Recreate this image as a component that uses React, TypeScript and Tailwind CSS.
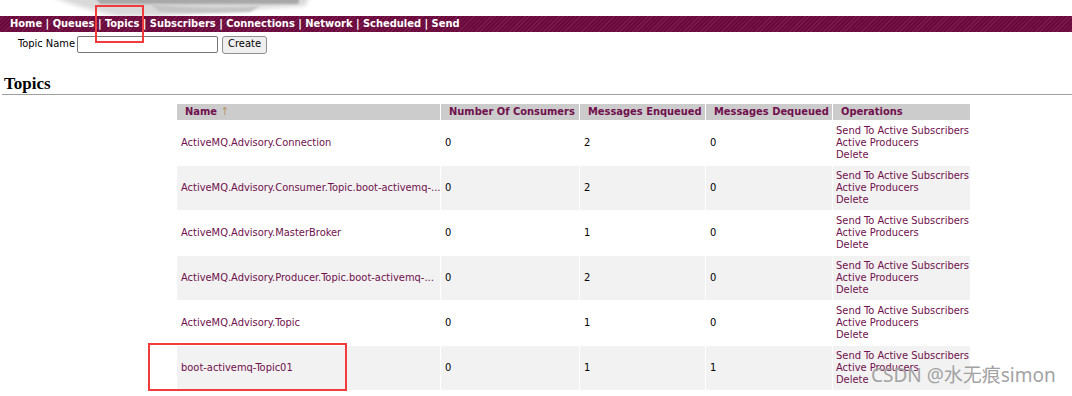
import React from "react";

const rows = [
  { name: "ActiveMQ.Advisory.Connection", c: "0", e: "2", d: "0" },
  { name: "ActiveMQ.Advisory.Consumer.Topic.boot-activemq-...", c: "0", e: "2", d: "0" },
  { name: "ActiveMQ.Advisory.MasterBroker", c: "0", e: "1", d: "0" },
  { name: "ActiveMQ.Advisory.Producer.Topic.boot-activemq-...", c: "0", e: "2", d: "0" },
  { name: "ActiveMQ.Advisory.Topic", c: "0", e: "1", d: "0" },
  { name: "boot-activemq-Topic01", c: "0", e: "1", d: "1" },
];

const navItems = ["Home", "Queues", "Topics", "Subscribers", "Connections", "Network", "Scheduled", "Send"];

function LogoFragment() {
  return (
    <svg width="320" height="16" viewBox="0 0 320 16" className="block">
      <defs>
        <filter id="b1" x="-20%" y="-50%" width="140%" height="200%">
          <feGaussianBlur stdDeviation="2" />
        </filter>
        <filter id="b2" x="-20%" y="-50%" width="140%" height="200%">
          <feGaussianBlur stdDeviation="1.2" />
        </filter>
      </defs>
      <path d="M50 -4 L310 -4 L305 6 Q230 10 160 16 L120 16 Q85 10 50 -4 Z" fill="#d9d9d9" filter="url(#b1)" />
      <path d="M95 -3 L300 -3 L298 4 L100 4 Z" fill="#a8a8a8" filter="url(#b2)" />
      <path d="M150 4 Q200 10 260 6 L250 12 Q200 14 160 12 Z" fill="#c4c4c4" filter="url(#b2)" />
    </svg>
  );
}

export default function App() {
  return (
    <div className="relative w-[1072px] h-[396px] overflow-hidden bg-white font-['DejaVu_Sans_Condensed','DejaVu_Sans',sans-serif] text-[11px] text-black">
      <div className="h-[16px]">
        <LogoFragment />
      </div>
      <div className="h-[16px] flex items-center pl-[10px] bg-[repeating-linear-gradient(135deg,#6a0a3c_0px,#6a0a3c_2px,#7b1b4d_2px,#7b1b4d_3px)] text-white font-bold text-[11px] leading-[16px]">
        {navItems.map((n, i) => (
          <span key={n} className="whitespace-pre">
            {i > 0 ? " | " : ""}
            {n}
          </span>
        ))}
      </div>
      <div className="flex items-center h-[25px] pl-[18px]">
        <span className="mr-[2px]">Topic Name</span>
        <div className="w-[141px] h-[17px] border border-[#767676] rounded-[2px] bg-white" />
        <div className="ml-[4px] w-[45px] h-[18px] border border-[#8f8f8f] rounded-[3px] bg-[#efefef] flex items-center justify-center text-[11px]">
          Create
        </div>
      </div>
      <div className="mt-[18px] pl-[4px] h-[19px]">
        <div className="font-['Liberation_Serif',serif] font-bold text-[17px] leading-[18px]">Topics</div>
      </div>
      <div className="ml-[2px] h-[1px] bg-[#a0a0a0]" />
      <div className="pl-[176px] pt-[8px]">
        <table className="border-separate border-spacing-[1px] table-fixed w-[795px]">
          <colgroup>
            <col className="w-[263px]" />
            <col className="w-[138px]" />
            <col className="w-[125px]" />
            <col className="w-[126px]" />
            <col className="w-[137px]" />
          </colgroup>
          <thead>
            <tr className="h-[16px] text-[#70104c] font-bold">
              <th className="bg-[#cccccc] text-left p-0 pl-[8px] leading-[16px] whitespace-nowrap">
                Name <span className="font-normal text-[#b8946a]">↑</span>
              </th>
              <th className="bg-[#cccccc] text-left p-0 pl-[8px] leading-[16px] whitespace-nowrap overflow-hidden">Number Of Consumers</th>
              <th className="bg-[#cccccc] text-left p-0 pl-[8px] leading-[16px] whitespace-nowrap overflow-hidden">Messages Enqueued</th>
              <th className="bg-[#cccccc] text-left p-0 pl-[8px] leading-[16px] whitespace-nowrap overflow-hidden">Messages Dequeued</th>
              <th className="bg-[#cccccc] text-left p-0 pl-[8px] leading-[16px] whitespace-nowrap">Operations</th>
            </tr>
          </thead>
          <tbody>
            {rows.map((r, i) => {
              const bg = i % 2 === 1 ? "bg-[#f2f2f2]" : "bg-white";
              return (
                <tr key={r.name} className="h-[44px]">
                  <td className={`${bg} p-0 pl-[4px] align-middle text-[#70104c] whitespace-nowrap overflow-hidden`}>{r.name}</td>
                  <td className={`${bg} p-0 pl-[4px] align-middle`}>{r.c}</td>
                  <td className={`${bg} p-0 pl-[4px] align-middle`}>{r.e}</td>
                  <td className={`${bg} p-0 pl-[4px] align-middle`}>{r.d}</td>
                  <td className={`${bg} p-0 pl-[3px] align-middle text-[#70104c] leading-[12px] whitespace-nowrap`}>
                    <div>Send To Active Subscribers</div>
                    <div>Active Producers</div>
                    <div>Delete</div>
                  </td>
                </tr>
              );
            })}
          </tbody>
        </table>
      </div>
      <div className="absolute left-[95px] top-[5px] w-[49px] h-[38px] border-2 border-[#f23c3c]" />
      <div className="absolute left-[148px] top-[343px] w-[199px] h-[48px] border-2 border-[#f23c3c]" />
      <div className="absolute left-[871px] top-[363px] text-[19px] leading-[25px] text-[#a3a3a3] font-['Noto_Sans','Noto_Sans_CJK_SC',sans-serif] whitespace-nowrap">
        CSDN @水无痕simon
      </div>
    </div>
  );
}
